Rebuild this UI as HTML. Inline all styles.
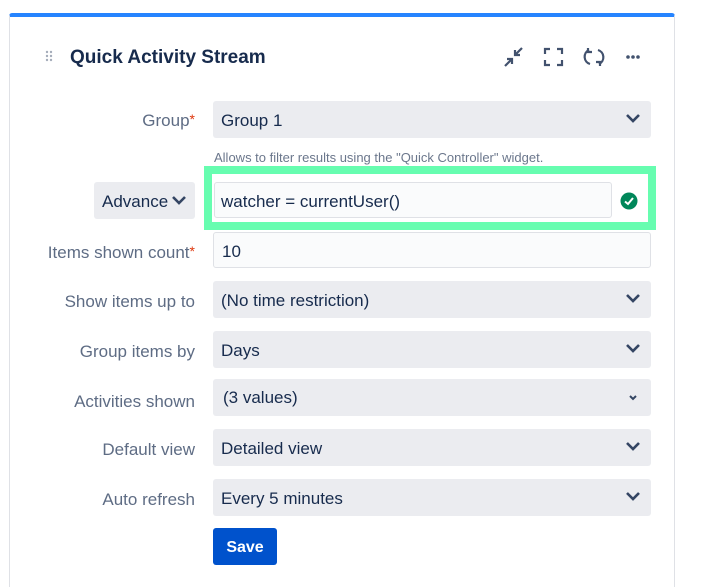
<!DOCTYPE html>
<html><head><style>
*{box-sizing:border-box;margin:0;padding:0}
html,body{width:705px;height:587px;overflow:hidden}
body{background:#fff;font-family:"Liberation Sans",sans-serif;position:relative}
.card{position:absolute;left:9px;top:13px;width:666px;height:590px;border:1px solid #dfe1e6;border-top:4px solid #2684ff;border-radius:3px}
.t{position:absolute;left:70px;top:47px;font-size:19px;font-weight:bold;color:#172b4d}
.lbl{position:absolute;right:510px;font-size:17px;color:#5e6c84;white-space:nowrap}
.sel{position:absolute;left:213px;width:438px;height:37px;background:#ebecf0;border-radius:3px;font-size:17px;color:#172b4d;padding:10px 0 0 8px}
.chev{position:absolute;right:10px;top:11px}
.req{color:#de350b;font-size:14px;vertical-align:top}
</style></head><body>
<div class="card"></div>
<svg style="position:absolute;left:45px;top:50px" width="8" height="12"><g fill="#a5adba"><circle cx="2" cy="2" r="1.2"/><circle cx="6" cy="2" r="1.2"/><circle cx="2" cy="6" r="1.2"/><circle cx="6" cy="6" r="1.2"/><circle cx="2" cy="10" r="1.2"/><circle cx="6" cy="10" r="1.2"/></g></svg>
<div class="t">Quick Activity Stream</div>
<svg style="position:absolute;left:503px;top:46px" width="140" height="22" fill="none" stroke="#42526e" stroke-width="2.2">
<path d="M2 20 L9 13 M4 13 H9 V18 M19 2 L12 9 M12 4 V9 H17"/>
<path d="M42 8 V3 H47 M54 3 H59 V8 M59 14 V19 H54 M47 19 H42 V14"/>
<path d="M86 4 A7.5 7.5 0 0 0 87 18"/>
<path d="M96 18 A7.5 7.5 0 0 0 95 4"/>
<path d="M85 2 V6 H89" />
<path d="M97 20 V16 H93" />
<g fill="#42526e" stroke="none"><circle cx="125" cy="11" r="1.8"/><circle cx="130" cy="11" r="1.8"/><circle cx="135" cy="11" r="1.8"/></g>
</svg>
<div class="lbl" style="top:111px">Group<span class="req">*</span></div>
<div class="sel" style="top:101px">Group 1<svg class="chev" width="16" height="12"><path d="M2 3 L8 9 L14 3" stroke="#344563" stroke-width="2.6" fill="none"/></svg></div>
<div style="position:absolute;left:214px;top:150px;font-size:13px;color:#6b778c">Allows to filter results using the "Quick Controller" widget.</div>
<div style="position:absolute;left:94px;top:182px;width:101px;height:37px;background:#ebecf0;border-radius:3px;font-size:17px;color:#172b4d;padding:10px 0 0 8px;overflow:hidden;white-space:nowrap">Advance<svg style="position:absolute;right:8px;top:12px;background:#ebecf0" width="16" height="12"><path d="M2 3 L8 9 L14 3" stroke="#344563" stroke-width="2.6" fill="none"/></svg></div>
<div style="position:absolute;left:204px;top:166px;width:452px;height:64px;border:8px solid #67fdb0"></div>
<div style="position:absolute;left:214px;top:182px;width:398px;height:36px;background:#fafbfc;border:1.5px solid #dfe1e6;border-radius:3px;font-size:17px;color:#172b4d;padding:9px 0 0 6px">watcher = currentUser()</div>
<svg style="position:absolute;left:620px;top:192px" width="18" height="18"><circle cx="9" cy="9" r="8.5" fill="#00875a"/><path d="M5 9.5 L8 12 L13 6" stroke="#fff" stroke-width="2" fill="none"/></svg>
<div class="lbl" style="top:243px">Items shown count<span class="req">*</span></div>
<div style="position:absolute;left:213px;top:232px;width:438px;height:36px;background:#fafbfc;border:1.5px solid #dfe1e6;border-radius:3px;font-size:17px;color:#172b4d;padding:9px 0 0 8px">10</div>
<div class="lbl" style="top:292px">Show items up to</div>
<div class="sel" style="top:281px">(No time restriction)<svg class="chev" width="16" height="12"><path d="M2 3 L8 9 L14 3" stroke="#344563" stroke-width="2.6" fill="none"/></svg></div>
<div class="lbl" style="top:342px">Group items by</div>
<div class="sel" style="top:331px">Days<svg class="chev" width="16" height="12"><path d="M2 3 L8 9 L14 3" stroke="#344563" stroke-width="2.6" fill="none"/></svg></div>
<div class="lbl" style="top:392px">Activities shown</div>
<div class="sel" style="top:379px;padding-left:10px;padding-top:9px">(3 values)<svg class="chev" width="16" height="12" style="top:13px"><path d="M5 4 L8 7 L11 4" stroke="#344563" stroke-width="2" fill="none"/></svg></div>
<div class="lbl" style="top:440px">Default view</div>
<div class="sel" style="top:429px">Detailed view<svg class="chev" width="16" height="12"><path d="M2 3 L8 9 L14 3" stroke="#344563" stroke-width="2.6" fill="none"/></svg></div>
<div class="lbl" style="top:490px">Auto refresh</div>
<div class="sel" style="top:479px">Every 5 minutes<svg class="chev" width="16" height="12"><path d="M2 3 L8 9 L14 3" stroke="#344563" stroke-width="2.6" fill="none"/></svg></div>
<div style="position:absolute;left:213px;top:528px;width:64px;height:37px;background:#0052cc;border-radius:3px;color:#fff;font-weight:bold;font-size:16px;text-align:center;padding-top:11px">Save</div>
</body></html>
